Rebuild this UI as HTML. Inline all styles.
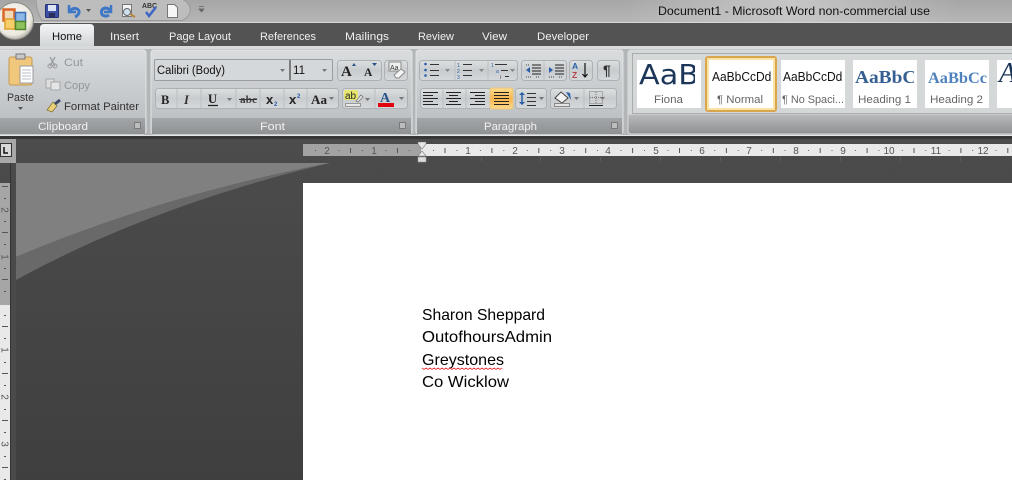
<!DOCTYPE html>
<html><head><meta charset="utf-8"><title>Document1 - Microsoft Word</title>
<style>html,body{margin:0;padding:0;background:#444;width:1012px;height:480px;overflow:hidden}svg{display:block}#r{filter:blur(.35px)}text{font-family:"Liberation Sans",sans-serif}</style>
</head><body>
<svg id="r" width="1012" height="480" viewBox="0 0 1012 480" xmlns="http://www.w3.org/2000/svg">
<defs>
<linearGradient id="tb" x1="0" y1="0" x2="0" y2="1"><stop offset="0" stop-color="#a6a6a6"/><stop offset="1" stop-color="#b6b6b6"/></linearGradient>
<linearGradient id="tbh" x1="0" y1="0" x2="1" y2="0"><stop offset="0" stop-color="#c6c6c6" stop-opacity="0"/><stop offset=".5" stop-color="#c6c6c6"/><stop offset="1" stop-color="#c6c6c6" stop-opacity="0"/></linearGradient>
<linearGradient id="tab" x1="0" y1="0" x2="0" y2="1"><stop offset="0" stop-color="#f4f5f6"/><stop offset="1" stop-color="#d2d6d8"/></linearGradient>
<linearGradient id="grp" x1="0" y1="0" x2="0" y2="1"><stop offset="0" stop-color="#dadddf"/><stop offset=".4" stop-color="#cbced0"/><stop offset="1" stop-color="#b8bcbf"/></linearGradient>
<linearGradient id="btn" x1="0" y1="0" x2="0" y2="1"><stop offset="0" stop-color="#dde0e1"/><stop offset=".5" stop-color="#c8ccce"/><stop offset="1" stop-color="#d6d9db"/></linearGradient>
<linearGradient id="lbl" x1="0" y1="0" x2="0" y2="1"><stop offset="0" stop-color="#a3a6a8"/><stop offset="1" stop-color="#8f9294"/></linearGradient>
<linearGradient id="sty" x1="0" y1="0" x2="0" y2="1"><stop offset="0" stop-color="#d6d9d9"/><stop offset=".76" stop-color="#d4d7d7"/><stop offset=".78" stop-color="#b5b7b8"/><stop offset="1" stop-color="#8f9192"/></linearGradient>
<linearGradient id="sel" x1="0" y1="0" x2="0" y2="1"><stop offset="0" stop-color="#fddc8e"/><stop offset=".5" stop-color="#f8b64f"/><stop offset="1" stop-color="#fdd98a"/></linearGradient>
<linearGradient id="bg" x1="0" y1="0" x2="0" y2="1"><stop offset="0" stop-color="#4c4c4c"/><stop offset="1" stop-color="#3f3f3f"/></linearGradient>
<radialGradient id="orb" cx=".45" cy=".4" r=".6"><stop offset="0" stop-color="#faf8f2"/><stop offset=".8" stop-color="#ece9e1"/><stop offset="1" stop-color="#b3afa7"/></radialGradient>
</defs>

<!-- title bar -->
<rect width="1012" height="23" fill="url(#tb)"/>
<rect x="620" width="340" height="22" fill="url(#tbh)"/>
<rect y="22" width="1012" height="1" fill="#d6d6d6"/>
<path d="M36 -1H182C193 4 193 16 182 20.500H42C38 14 36 6 36 -1Z" fill="#bdbdbd" stroke="#9a9a9a"/>
<text x="658" y="15" font-size="12" fill="#111" textLength="272" lengthAdjust="spacingAndGlyphs">Document1  -  Microsoft Word non-commercial use</text>

<!-- tab strip -->
<rect y="23" width="1012" height="23" fill="#535353"/>
<path d="M40 46V28Q40 24 44 24H90Q94 24 94 28V46Z" fill="url(#tab)"/>
<g font-size="11" fill="#f0f0f0">
<text x="52" y="40" fill="#111" textLength="30" lengthAdjust="spacingAndGlyphs">Home</text>
<text x="110" y="40" textLength="29" lengthAdjust="spacingAndGlyphs">Insert</text>
<text x="169" y="40" textLength="62" lengthAdjust="spacingAndGlyphs">Page Layout</text>
<text x="260" y="40" textLength="56" lengthAdjust="spacingAndGlyphs">References</text>
<text x="345" y="40" textLength="44" lengthAdjust="spacingAndGlyphs">Mailings</text>
<text x="418" y="40" textLength="36" lengthAdjust="spacingAndGlyphs">Review</text>
<text x="482" y="40" textLength="25" lengthAdjust="spacingAndGlyphs">View</text>
<text x="537" y="40" textLength="52" lengthAdjust="spacingAndGlyphs">Developer</text>
</g>

<!-- ribbon -->
<rect y="46" width="1012" height="90" fill="#b3b6b8"/>
<rect y="46" width="1012" height="3" fill="#d8dadb"/>

<rect x="-3" y="50" width="149" height="84" rx="3" fill="url(#grp)" stroke="#e2e4e5"/>
<rect x="151" y="50" width="261" height="84" rx="3" fill="url(#grp)" stroke="#e2e4e5"/>
<rect x="416" y="50" width="207" height="84" rx="3" fill="url(#grp)" stroke="#e2e4e5"/>
<rect x="628" y="50" width="390" height="84" rx="3" fill="url(#sty)" stroke="#d8dadb"/>
<rect x="-2" y="118" width="147" height="16" fill="url(#lbl)"/>
<rect x="152" y="118" width="259" height="16" fill="url(#lbl)"/>
<rect x="417" y="118" width="205" height="16" fill="url(#lbl)"/>
<g font-size="11" fill="#f2f2f2">
<text x="38" y="130" textLength="50" lengthAdjust="spacingAndGlyphs">Clipboard</text>
<text x="260" y="130" textLength="25" lengthAdjust="spacingAndGlyphs">Font</text>
<text x="484" y="130" textLength="53" lengthAdjust="spacingAndGlyphs">Paragraph</text>
</g>
<g fill="#bcbebe" stroke="#7a7a7a"><rect x="134.500" y="122.500" width="6" height="6"/><rect x="399.500" y="122.500" width="6" height="6"/><rect x="611.500" y="122.500" width="6" height="6"/></g>

<!-- Clipboard -->
<rect x="9" y="57" width="23" height="28" rx="2" fill="#f0c77c" stroke="#c49a52"/>
<rect x="16" y="54" width="9" height="5" fill="#c9c9c9" stroke="#777"/>
<path d="M20 66H33V83H20Z" fill="#fff" stroke="#9a9a9a"/>
<path d="M22 70H31M22 73H31M22 76H31M22 79H31" stroke="#b7bcc4"/>
<text x="7" y="101" font-size="11" fill="#333" textLength="27" lengthAdjust="spacingAndGlyphs">Paste</text>
<path d="M18 107h5l-2.500 3z" fill="#555"/>
<path d="M50 57l5 9M55 57l-5 9" stroke="#9a9c9e" stroke-width="1.300"/><circle cx="50" cy="66" r="2" fill="none" stroke="#9a9c9e"/><circle cx="55" cy="66" r="2" fill="none" stroke="#9a9c9e"/>
<text x="64" y="66" font-size="11" fill="#94979a" textLength="19" lengthAdjust="spacingAndGlyphs">Cut</text>
<rect x="46" y="79" width="8" height="9" fill="#ddd" stroke="#a5a7a9"/><rect x="51" y="82" width="9" height="8" fill="#e5e5e5" stroke="#a5a7a9"/>
<text x="64" y="89" font-size="11" fill="#94979a" textLength="26" lengthAdjust="spacingAndGlyphs">Copy</text>
<path d="M47 110L53 102L57 106L52 112Z" fill="#e8cf78" stroke="#7d6b2c" stroke-width=".7"/><path d="M55 104L60 100" stroke="#3b4a6b" stroke-width="3"/>
<text x="64" y="110" font-size="11" fill="#333" textLength="75" lengthAdjust="spacingAndGlyphs">Format Painter</text>

<!-- Font group -->
<rect x="154.500" y="59.500" width="178" height="21" rx="1" fill="#d5d8da" stroke="#9a9c9e"/>
<rect x="289" y="60" width="2" height="20" fill="#7b7d7f"/>
<text x="157" y="74" font-size="11.500" fill="#111" textLength="68" lengthAdjust="spacingAndGlyphs">Calibri (Body)</text>
<text x="293" y="74" font-size="11.500" fill="#111" textLength="12" lengthAdjust="spacingAndGlyphs">11</text>
<path d="M280 69h5l-2.500 3zM322 69h5l-2.500 3z" fill="#777"/>
<rect x="337.500" y="60.500" width="44" height="20" rx="3" fill="url(#btn)" stroke="#aeb1b3"/>
<rect x="384.500" y="60.500" width="23" height="20" rx="3" fill="url(#btn)" stroke="#aeb1b3"/>
<text x="341" y="76" font-size="15" font-weight="bold" fill="#222" style="font-family:'Liberation Serif',serif">A</text>
<text x="364" y="76" font-size="11.500" font-weight="bold" fill="#222" style="font-family:'Liberation Serif',serif">A</text>
<path d="M352 66l2-3 2 3z" fill="#27518a"/><path d="M372 63h5l-2.500 3z" fill="#27518a"/>
<rect x="389" y="62" width="12" height="9" fill="#eef0f0" stroke="#888"/>
<text x="390" y="70" font-size="7" fill="#333">Aa</text>
<path d="M394 75l7-6 4 3-6 6h-3z" fill="#f5f5f5" stroke="#8a8a8a"/>

<rect x="155.500" y="88.500" width="183" height="20" rx="3" fill="url(#btn)" stroke="#aeb1b3"/>
<path d="M177 89v19M201 89v19M236 89v19M260 89v19M284 89v19M307 89v19" stroke="#bcbfc1"/>
<text x="161" y="104" font-size="12.500" font-weight="bold" fill="#222" style="font-family:'Liberation Serif',serif">B</text>
<text x="184" y="104" font-size="12.500" font-style="italic" font-weight="bold" fill="#333" style="font-family:'Liberation Serif',serif">I</text>
<text x="208" y="103" font-size="12.500" font-weight="bold" fill="#222" style="font-family:'Liberation Serif',serif">U</text>
<path d="M208 105.500h10" stroke="#222" stroke-width="1.300"/>
<path d="M227 98h5l-2.500 3z" fill="#777"/>
<text x="240" y="103" font-size="10.500" font-weight="bold" fill="#444" style="font-family:'Liberation Serif',serif" textLength="17" lengthAdjust="spacingAndGlyphs">abc</text>
<path d="M239 99.500h18" stroke="#333"/>
<text x="266" y="104" font-size="13" font-weight="bold" fill="#222">x</text>
<text x="274" y="106" font-size="6" font-weight="bold" fill="#2a5ea8">2</text>
<text x="289" y="104" font-size="13" font-weight="bold" fill="#222">x</text>
<text x="297" y="98" font-size="6" font-weight="bold" fill="#2a5ea8">2</text>
<text x="311" y="104" font-size="13" font-weight="bold" fill="#222" style="font-family:'Liberation Serif',serif" textLength="16" lengthAdjust="spacingAndGlyphs">Aa</text>
<path d="M329 97h5l-2.500 3z" fill="#777"/>

<rect x="342.500" y="88.500" width="65" height="20" rx="3" fill="url(#btn)" stroke="#aeb1b3"/>
<path d="M375 89v19" stroke="#bcbfc1"/>
<rect x="344" y="90" width="14" height="10" rx="2" fill="#e7e66f"/>
<text x="345" y="99" font-size="10" fill="#222">ab</text>
<path d="M356 101l5-6 2 2-5 5z" fill="#e9e9e9" stroke="#777" stroke-width=".8"/>
<rect x="345.500" y="103.500" width="15" height="3" fill="#e8e8e8" stroke="#999"/>
<path d="M365 98h5l-2.500 3z" fill="#777"/>
<text x="380" y="102" font-size="14" font-weight="bold" fill="#27518a" style="font-family:'Liberation Serif',serif">A</text>
<rect x="378" y="103" width="16" height="4" fill="#e0000e"/>
<path d="M399 97h5l-2.500 3z" fill="#777"/>

<!-- Paragraph group -->
<rect x="419.500" y="60.500" width="98" height="20" rx="3" fill="url(#btn)" stroke="#aeb1b3"/>
<path d="M455 61v19M488 61v19" stroke="#bcbfc1"/>
<g fill="#2a5ea8"><circle cx="425.500" cy="64" r="1.300"/><circle cx="425.500" cy="70" r="1.300"/><circle cx="425.500" cy="75.500" r="1.300"/></g>
<path d="M430 64.500h9M430 70.500h9M430 75.500h9M463 64.500h9M463 70.500h9M463 75.500h9" stroke="#333"/>
<text x="457" y="67" font-size="5" fill="#2a5ea8">1</text><text x="457" y="73" font-size="5" fill="#2a5ea8">2</text><text x="457" y="79" font-size="5" fill="#2a5ea8">3</text>
<path d="M445 69h5l-2.500 3zM479 69h5l-2.500 3zM510 69h5l-2.500 3z" fill="#888"/>
<text x="491" y="67" font-size="5" fill="#2a5ea8">1</text><text x="496" y="73" font-size="5" fill="#2a5ea8">a</text><text x="500" y="79" font-size="5" fill="#333">i</text>
<path d="M495 64.500h12M501 70.500h7M505 76.500h4" stroke="#333"/>
<rect x="521.500" y="60.500" width="45" height="20" rx="3" fill="url(#btn)" stroke="#aeb1b3"/>
<path d="M544 61v19" stroke="#bcbfc1"/>
<path d="M526 70l4-3v6z" fill="#2a5ea8"/><path d="M532 65h9M532 68h9M532 71h9M532 74h9" stroke="#222"/><path d="M526 65h4M526 77h6M536 77h4" stroke="#444" stroke-dasharray="1 1"/>
<path d="M553 70l-4-3v6z" fill="#2a5ea8"/><path d="M555 65h9M555 68h9M555 71h9M555 74h9" stroke="#222"/><path d="M549 77h6M559 77h4" stroke="#444" stroke-dasharray="1 1"/>
<rect x="569.500" y="60.500" width="23" height="20" rx="3" fill="url(#btn)" stroke="#aeb1b3"/>
<text x="572" y="69" font-size="8.500" font-weight="bold" fill="#2a5ea8">A</text>
<text x="572" y="78" font-size="8.500" font-weight="bold" fill="#b7424c">Z</text>
<path d="M585 63v14M582.500 74l2.500 3 2.500-3" stroke="#111" fill="none" stroke-width="1.200"/>
<rect x="597.500" y="60.500" width="22" height="20" rx="3" fill="url(#btn)" stroke="#aeb1b3"/>
<text x="603" y="75" font-size="14" font-weight="bold" fill="#333">¶</text>

<rect x="420.500" y="88.500" width="92" height="20" rx="3" fill="url(#btn)" stroke="#aeb1b3"/>
<path d="M443 89v19M466 89v19" stroke="#bcbfc1"/>
<rect x="490" y="88" width="23" height="21" rx="2" fill="url(#sel)" stroke="#e8c57d"/>
<path d="M423 92.500h15M423 95.500h10M423 98.500h15M423 101.500h10M423 104.500h15" stroke="#222"/>
<path d="M446 92.500h15M449 95.500h9M446 98.500h15M449 101.500h9M446 104.500h15" stroke="#222"/>
<path d="M470 92.500h15M475 95.500h10M470 98.500h15M475 101.500h10M470 104.500h15" stroke="#222"/>
<path d="M494 92.500h15M494 95.500h15M494 98.500h15M494 101.500h15M494 104.500h15" stroke="#222"/>
<rect x="515.500" y="88.500" width="31" height="20" rx="3" fill="url(#btn)" stroke="#aeb1b3"/>
<path d="M522 92l-3 3h6zM522 105l-3-3h6z" fill="#2a5ea8"/><path d="M522 94v9" stroke="#2a5ea8" stroke-width="1.500"/>
<path d="M527 93.500h9M527 97.500h9M527 101.500h9M527 105.500h9" stroke="#333"/><path d="M539 97h5l-2.500 3z" fill="#777"/>
<rect x="550.500" y="88.500" width="66" height="20" rx="3" fill="url(#btn)" stroke="#aeb1b3"/>
<path d="M584 89v19" stroke="#bcbfc1"/>
<path d="M555 98l6-6 7 6-6 5z" fill="#f3f3f3" stroke="#444"/><path d="M566 92l4 1 1 7z" fill="#2a5ea8"/>
<rect x="554.500" y="103.500" width="15" height="3" fill="#e4e4e4" stroke="#888"/>
<path d="M574 97h5l-2.500 3zM600 97h5l-2.500 3z" fill="#777"/>
<rect x="589.500" y="91.500" width="13" height="12" fill="none" stroke="#777" stroke-dasharray="1 1"/>
<path d="M596 92v11M590 97.500h12" stroke="#777" stroke-dasharray="1 1"/><path d="M589 105.500h14" stroke="#222"/>

<!-- Styles -->
<rect x="632.500" y="53.500" width="400" height="60" fill="none" stroke="#a9acad"/>
<rect x="637" y="60" width="64" height="48" fill="#fff"/>
<rect x="781" y="60" width="64" height="48" fill="#fff"/>
<rect x="853" y="60" width="64" height="48" fill="#fff"/>
<rect x="925" y="60" width="64" height="48" fill="#fff"/>
<rect x="997" y="60" width="15" height="48" fill="#fff"/>
<rect x="706" y="57" width="70" height="54" rx="2" fill="#fff" stroke="#d9a64e" stroke-width="2"/>
<rect x="708" y="59" width="66" height="50" fill="none" stroke="#fbe3a6" stroke-width="2"/>
<svg x="637" y="60" width="58" height="48"><text x="2" y="24" font-size="28" fill="#1b3658" style="font-family:'DejaVu Sans',sans-serif" textLength="60" lengthAdjust="spacingAndGlyphs">AaB</text></svg>
<text x="654" y="103" font-size="11" fill="#666" textLength="29" lengthAdjust="spacingAndGlyphs">Fiona</text>
<svg x="711" y="60" width="60" height="30"><text x="1" y="21" font-size="13" fill="#111" textLength="74" lengthAdjust="spacingAndGlyphs">AaBbCcDdEe</text></svg>
<text x="717" y="103" font-size="11" fill="#666" textLength="46" lengthAdjust="spacingAndGlyphs">¶ Normal</text>
<svg x="783" y="60" width="60" height="30"><text x="0" y="21" font-size="13" fill="#111" textLength="74" lengthAdjust="spacingAndGlyphs">AaBbCcDdEe</text></svg>
<text x="782" y="103" font-size="11" fill="#666" textLength="62" lengthAdjust="spacingAndGlyphs">¶ No Spaci...</text>
<svg x="855" y="60" width="59" height="30"><text x="0" y="23" font-size="18" font-weight="bold" fill="#365f91" style="font-family:'Liberation Serif',serif" textLength="70" lengthAdjust="spacingAndGlyphs">AaBbCc</text></svg>
<text x="858" y="103" font-size="11" fill="#666" textLength="53" lengthAdjust="spacingAndGlyphs">Heading 1</text>
<text x="928" y="83" font-size="16" font-weight="bold" fill="#4f81bd" style="font-family:'Liberation Serif',serif" textLength="59" lengthAdjust="spacingAndGlyphs">AaBbCc</text>
<text x="930" y="103" font-size="11" fill="#666" textLength="53" lengthAdjust="spacingAndGlyphs">Heading 2</text>
<text x="999" y="82" font-size="28" fill="#1b3658" font-style="italic" style="font-family:'Liberation Serif',serif">A</text>

<!-- work area -->
<rect y="136" width="1012" height="344" fill="url(#bg)"/>
<rect y="135" width="1012" height="1" fill="#e4e4e4"/>
<rect y="136" width="1012" height="3" fill="#363636"/>
<rect x="11" y="163" width="5" height="317" fill="#4a4a4a"/>
<rect x="0" y="139" width="16" height="24" fill="#a8a8a8"/>
<rect x="0.500" y="143.500" width="11" height="13" fill="#d8d8d8" stroke="#333"/>
<path d="M4 147v6h4" stroke="#111" stroke-width="1.500" fill="none"/>
<path d="M16 163H330C200 188 100 222 16 257Z" fill="#808080"/>
<path d="M16 257C100 222 200 188 330 163C215 190 105 231 16 280Z" fill="#696969"/>

<!-- h ruler -->
<rect x="303" y="144" width="118" height="12" fill="#a3a3a3"/>
<rect x="421" y="144" width="591" height="12" fill="#e9e9e9"/>
<path d="M315 150.500H421" stroke="#555" stroke-dasharray="1 22.440"/>
<path d="M350.500 148v5M397.500 148v5" stroke="#555"/>
<path d="M433 150.500H1012" stroke="#666" stroke-dasharray="1 22.440"/>
<path d="M444.500 150.500H1012" stroke="#555" stroke-width="5" stroke-dasharray="1 45.900"/>
<path d="M481.500 157v4M540.500 157v4M600.500 157v4M660.500 157v4M720.500 157v4M780.500 157v4M840.500 157v4M900.500 157v4M960.500 157v4" stroke="#6a6a6a" opacity=".6"/>
<g font-size="10" fill="#555" text-anchor="middle">
<text x="327" y="154">2</text><text x="374" y="154">1</text>
<text x="468" y="154">1</text><text x="515" y="154">2</text><text x="562" y="154">3</text><text x="608" y="154">4</text><text x="656" y="154">5</text><text x="702" y="154">6</text><text x="749" y="154">7</text><text x="796" y="154">8</text><text x="843" y="154">9</text><text x="889" y="154">10</text><text x="936" y="154">11</text><text x="983" y="154">12</text>
</g>
<path d="M418 142h8v2l-4 5-4-5zM418 156h8l-4-5-4 5z" fill="#e8e8e8" stroke="#777" stroke-width=".6"/>
<rect x="418" y="157" width="8" height="5" fill="#dcdcdc" stroke="#999" stroke-width=".6"/>

<!-- v ruler -->
<rect x="0" y="183" width="10" height="122" fill="#a6a6a6"/>
<rect x="0" y="305" width="10" height="175" fill="#e9e9e9"/>
<rect x="10" y="163" width="1" height="317" fill="#333"/>
<path d="M4 198.500h2M4 221.500h2M4 244.500h2M4 268.500h2M4 291.500h2M4 315.500h2M4 338.500h2M4 362.500h2M4 385.500h2M4 409.500h2M4 432.500h2M4 456.500h2M4 479.500h2" stroke="#555"/>
<path d="M2 186.500h6M2 232.500h6M2 279.500h6M2 326.500h6M2 373.500h6M2 420.500h6M2 467.500h6" stroke="#555"/>
<g font-size="10" fill="#555" text-anchor="middle">
<text transform="translate(1.500,210) rotate(90)" y="0">2</text>
<text transform="translate(1.500,257) rotate(90)" y="0">1</text>
<text transform="translate(1.500,350) rotate(90)" y="0">1</text>
<text transform="translate(1.500,397) rotate(90)" y="0">2</text>
<text transform="translate(1.500,444) rotate(90)" y="0">3</text>
</g>

<!-- page -->
<rect x="303" y="183" width="709" height="297" fill="#fff"/>
<g font-size="16" fill="#000">
<text x="422" y="320" textLength="123" lengthAdjust="spacingAndGlyphs">Sharon Sheppard</text>
<text x="422" y="342" textLength="130" lengthAdjust="spacingAndGlyphs">OutofhoursAdmin</text>
<text x="422" y="365" textLength="82" lengthAdjust="spacingAndGlyphs">Greystones</text>
<text x="422" y="387" textLength="87" lengthAdjust="spacingAndGlyphs">Co Wicklow</text>
</g>
<path d="M422 368l2 1.500 2-1.500 2 1.500 2-1.500 2 1.500 2-1.500 2 1.500 2-1.500 2 1.500 2-1.500 2 1.500 2-1.500 2 1.500 2-1.500 2 1.500 2-1.500 2 1.500 2-1.500 2 1.500 2-1.500 2 1.500 2-1.500 2 1.500 2-1.500 2 1.500 2-1.500 2 1.500 2-1.500 2 1.500 2-1.500 2 1.500 2-1.500 2 1.500 2-1.500 2 1.500 2-1.500 2 1.500 2-1.500 2 1.500 2-1.500" fill="none" stroke="#d33" stroke-width=".8"/>

<!-- office orb -->
<circle cx="15" cy="21" r="18.500" fill="url(#orb)" stroke="#8a8a84"/>
<rect x="3.500" y="9.500" width="11" height="11" fill="#f0d9b8" stroke="#d9652a" stroke-width="2.500"/>
<rect x="5" y="19" width="10" height="10" fill="#f5cf6b" stroke="#e0a02a" stroke-width="1.500"/>
<rect x="15.500" y="12.500" width="10" height="9" fill="#8db7e4" stroke="#3a6fb5" stroke-width="1.500"/>
<rect x="15.500" y="21.500" width="10" height="8" fill="#8fc25f" stroke="#54862c" stroke-width="1.500"/>

<!-- QAT icons -->
<rect x="45.500" y="4.500" width="13" height="13" rx="1" fill="#3c4ea6" stroke="#23306f"/>
<rect x="48" y="5" width="8" height="6" fill="#dce3f2"/>
<rect x="49" y="13" width="6" height="4" fill="#2b2f57"/>
<path d="M69 5v7h7" fill="none" stroke="#3f77c7" stroke-width="2.500"/>
<path d="M70 11c4-5 10-2 9 2-1 2-2 3-4 4" fill="none" stroke="#3f77c7" stroke-width="3"/>
<path d="M86 9h5l-2.500 3z" fill="#555"/>
<path d="M111 5v7h-7" fill="none" stroke="#3f77c7" stroke-width="2.500"/>
<path d="M110 10c-5-4-9-1-8.500 3 .5 3 5 4 7.500 2" fill="none" stroke="#3f77c7" stroke-width="3"/>
<rect x="122.500" y="4.500" width="9" height="12" fill="#f5f5f5" stroke="#777"/>
<circle cx="127" cy="12" r="3.500" fill="#cfe1ee" stroke="#666"/>
<path d="M130 14l5 3" stroke="#b8843e" stroke-width="2"/>
<text x="142" y="8" font-size="7" font-weight="bold" fill="#333" textLength="15" lengthAdjust="spacingAndGlyphs">ABC</text>
<path d="M146 12l3 4 7-9" fill="none" stroke="#3f66c4" stroke-width="2.500"/>
<path d="M167.500 4.500h7l3 3v10h-10z" fill="#f6f6f6" stroke="#777"/>
<path d="M199 6.500h5M199 9l2.500 3 2.500-3z" fill="#666" stroke="#666" stroke-width=".7"/>
</svg>
</body></html>
